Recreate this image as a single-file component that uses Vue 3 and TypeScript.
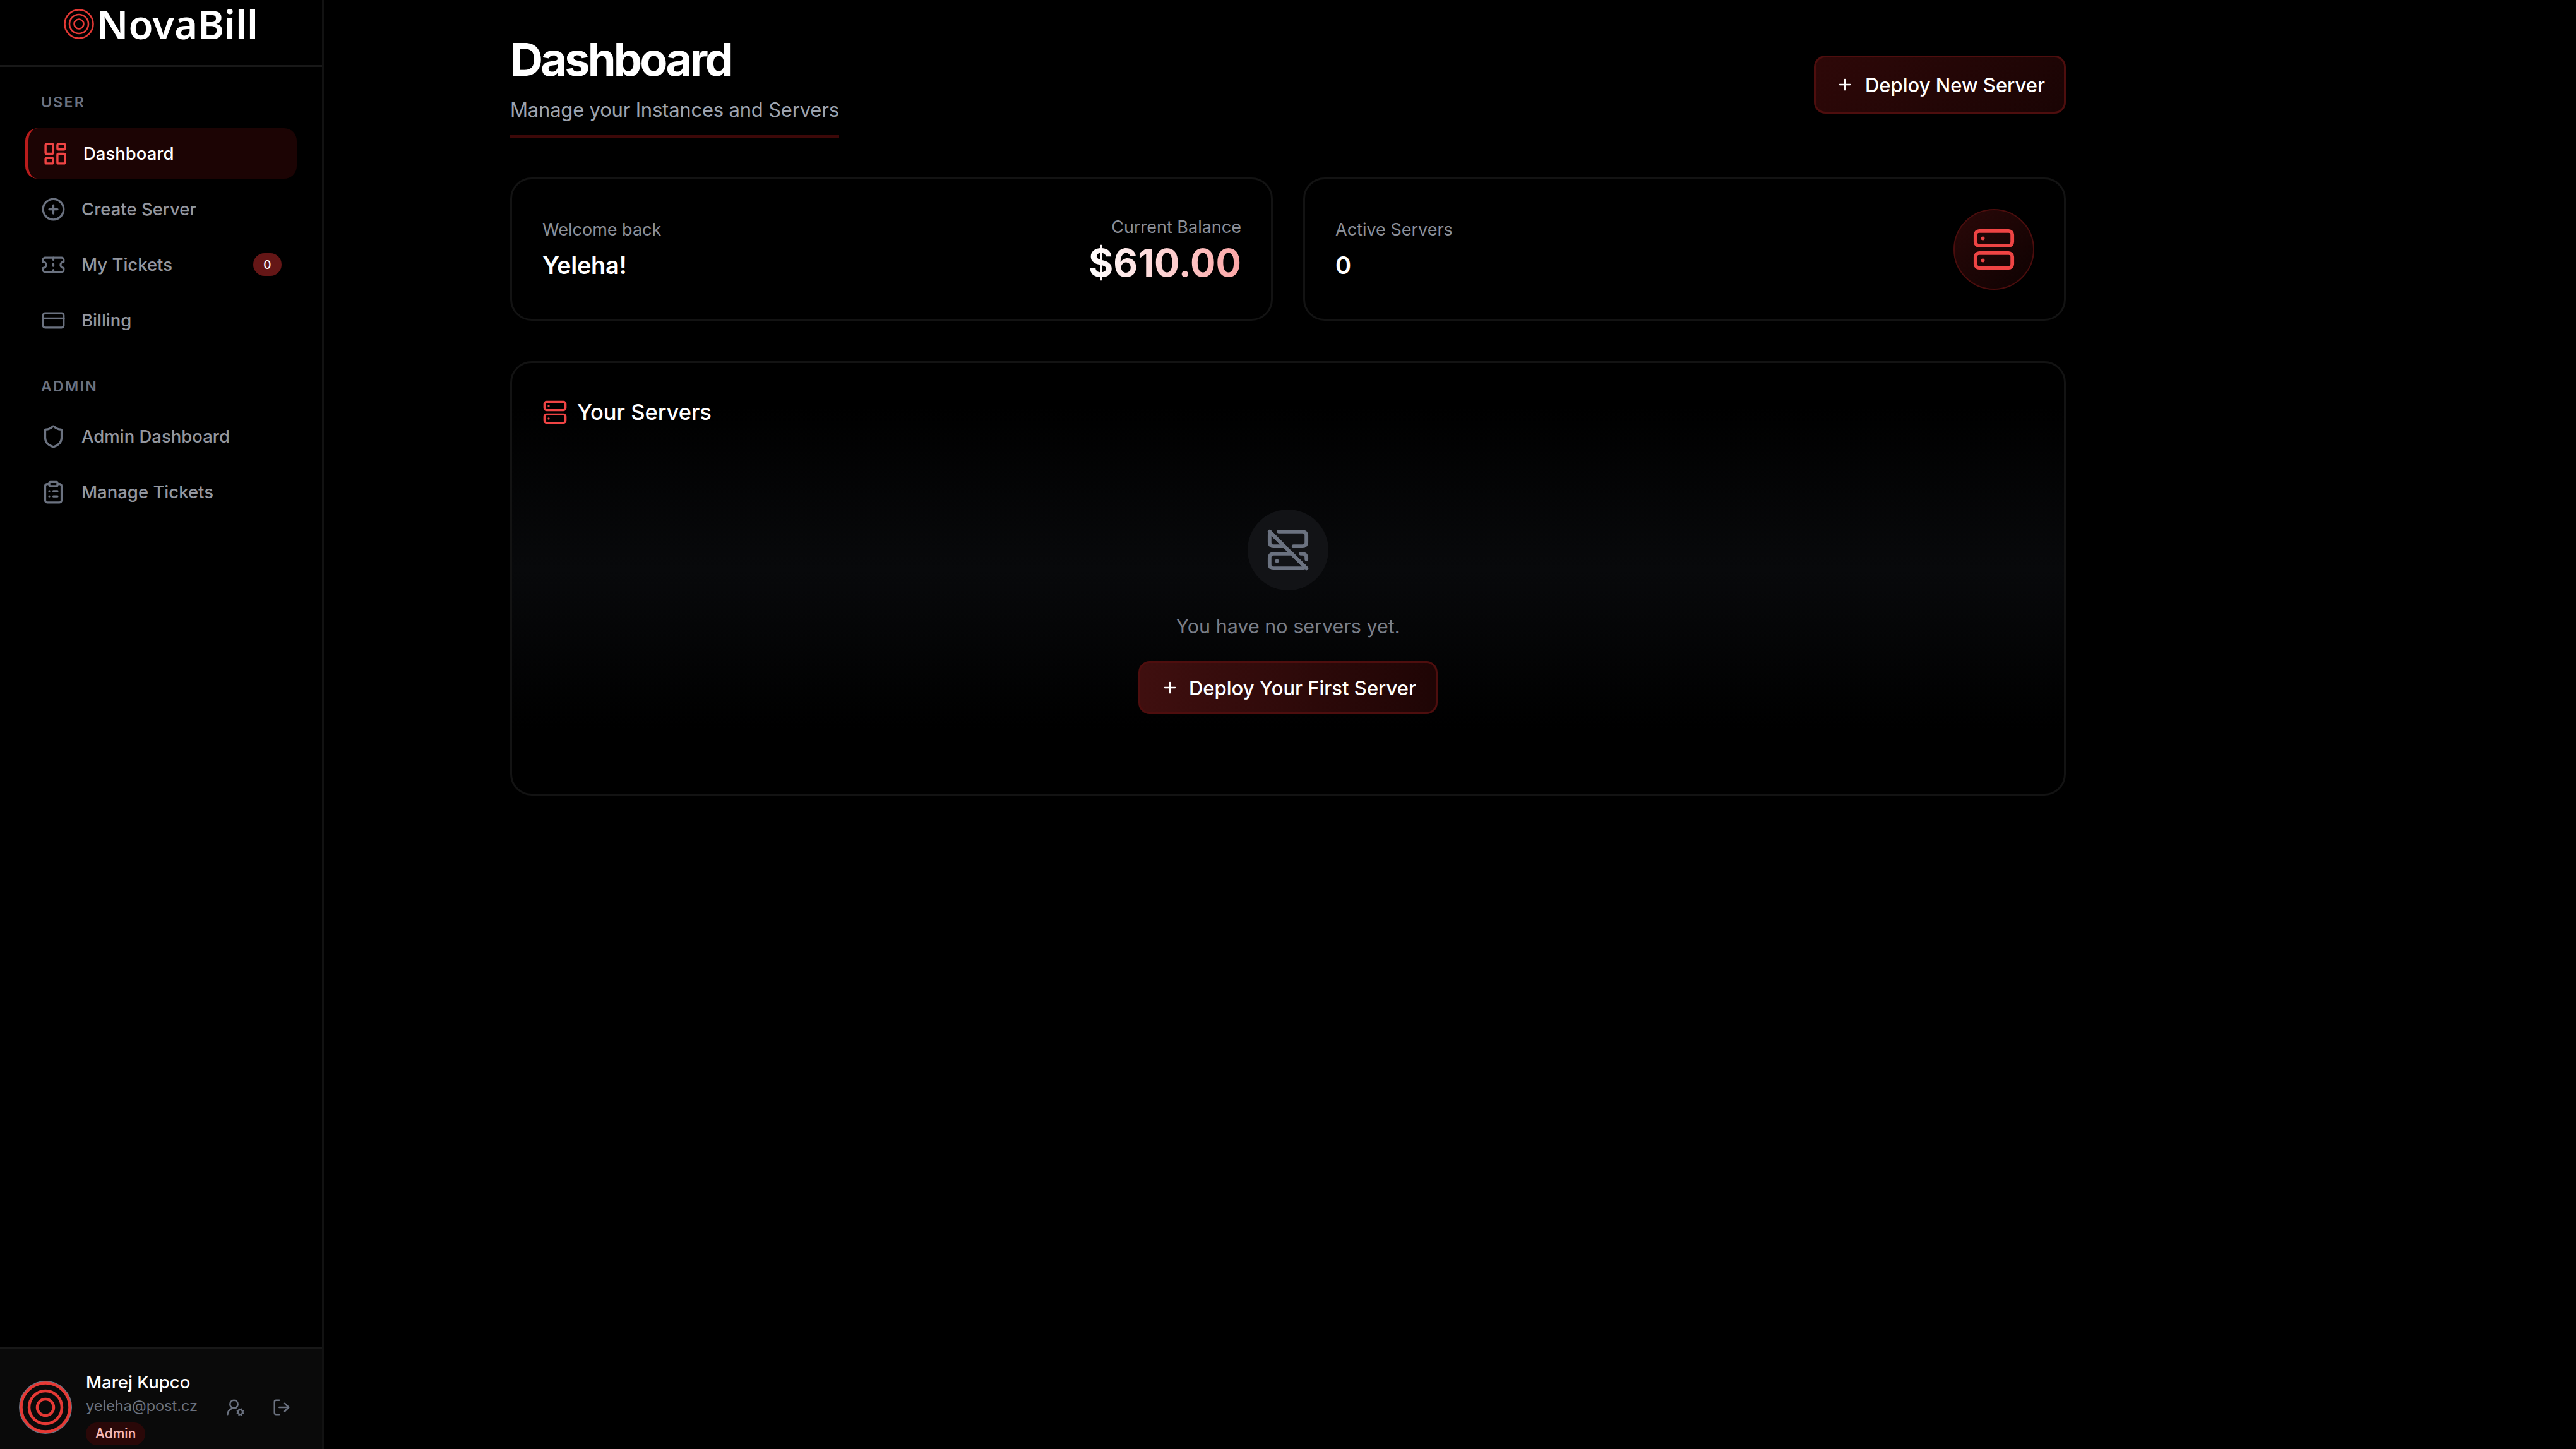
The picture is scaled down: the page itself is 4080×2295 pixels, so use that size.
<script setup lang="ts">
const icons: Record<string, string> = {
  dashboard: '<rect x="3" y="3" width="7" height="9" rx="1"/><rect x="14" y="3" width="7" height="5" rx="1"/><rect x="14" y="12" width="7" height="9" rx="1"/><rect x="3" y="16" width="7" height="5" rx="1"/>',
  create: '<circle cx="12" cy="12" r="10"/><path d="M8 12h8M12 8v8"/>',
  ticket: '<path d="M2 9a3 3 0 0 1 0 6v2a2 2 0 0 0 2 2h16a2 2 0 0 0 2-2v-2a3 3 0 0 1 0-6V7a2 2 0 0 0-2-2H4a2 2 0 0 0-2 2Z"/><path d="M12 5v2M12 17v2M12 11v2"/>',
  card: '<rect x="2" y="5" width="20" height="14" rx="2"/><path d="M2 10h20"/>',
  shield: '<path d="M20 13c0 5-3.5 7.5-7.66 8.95a1 1 0 0 1-.67-.01C7.5 20.5 4 18 4 13V6a1 1 0 0 1 1-1c2 0 4.5-1.2 6.24-2.72a1.17 1.17 0 0 1 1.52 0C14.51 3.81 17 5 19 5a1 1 0 0 1 1 1z"/>',
  clipboard: '<rect x="8" y="2" width="8" height="4" rx="1"/><path d="M16 4h2a2 2 0 0 1 2 2v14a2 2 0 0 1-2 2H6a2 2 0 0 1-2-2V6a2 2 0 0 1 2-2h2"/><path d="M12 11h4M12 16h4M8 11h.01M8 16h.01"/>',
  server: '<rect x="2" y="2" width="20" height="8" rx="2"/><rect x="2" y="14" width="20" height="8" rx="2"/><path d="M6 6h.01M6 18h.01"/>',
  serverOff: '<path d="M7 2h13a2 2 0 0 1 2 2v4a2 2 0 0 1-2 2h-5"/><path d="M10 10 2.5 2.5C2 2 2 2.5 2 5v3a2 2 0 0 0 2 2h6z"/><path d="M22 17v-1a2 2 0 0 0-2-2h-1"/><path d="M4 14a2 2 0 0 0-2 2v4a2 2 0 0 0 2 2h16.5l1-.5.5.5-8-8H4z"/><path d="M6 18h.01M2 2l20 20"/>',
  userCog: '<path d="m14.305 19.53.923-.382M15.228 16.852l-.923-.383M16.852 15.228l-.383-.923M16.852 20.772l-.383.924M19.148 15.228l.383-.923M19.53 21.696l-.382-.924M20.772 16.852l.924-.383M20.772 19.148l.924.383M2 21a8 8 0 0 1 10.434-7.62"/><circle cx="10" cy="8" r="5"/><circle cx="18" cy="18" r="3"/>',
  logout: '<path d="M9 21H5a2 2 0 0 1-2-2V5a2 2 0 0 1 2-2h4"/><path d="m16 17 5-5-5-5M21 12H9"/>',
  plus: '<path d="M5 12h14M12 5v14"/>'
}

const userNav = [
  { label: 'Dashboard', icon: 'dashboard', active: true },
  { label: 'Create Server', icon: 'create' },
  { label: 'My Tickets', icon: 'ticket', badge: 0 },
  { label: 'Billing', icon: 'card' }
]

const adminNav = [
  { label: 'Admin Dashboard', icon: 'shield' },
  { label: 'Manage Tickets', icon: 'clipboard' }
]
</script>

<template>
  <div class="app">
    <aside class="sidebar">
      <div class="brand">
        <svg class="brand-mark" viewBox="0 0 48 48">
          <circle cx="24" cy="24" r="22.5" />
          <circle cx="24" cy="24" r="15" />
          <circle cx="24" cy="24" r="7.5" />
        </svg>
        <span>NovaBill</span>
      </div>

      <nav class="nav">
        <p class="nav-title">USER</p>
        <a v-for="item in userNav" :key="item.label" class="nav-item" :class="{ active: item.active }">
          <svg class="icon" viewBox="0 0 24 24" v-html="icons[item.icon]"></svg>
          <span>{{ item.label }}</span>
          <em v-if="item.badge !== undefined" class="badge">{{ item.badge }}</em>
        </a>

        <p class="nav-title admin">ADMIN</p>
        <a v-for="item in adminNav" :key="item.label" class="nav-item">
          <svg class="icon" viewBox="0 0 24 24" v-html="icons[item.icon]"></svg>
          <span>{{ item.label }}</span>
        </a>
      </nav>

      <div class="account">
        <svg class="avatar" viewBox="0 0 84 84">
          <circle class="avatar-edge" cx="42" cy="42" r="41" />
          <circle cx="42" cy="42" r="38.5" />
          <circle cx="42" cy="42" r="26" />
          <circle cx="42" cy="42" r="13" />
        </svg>
        <div class="account-info">
          <strong>Marej Kupco</strong>
          <span>yeleha@post.cz</span>
          <em>Admin</em>
        </div>
        <svg class="icon small cog" viewBox="0 0 24 24" v-html="icons.userCog"></svg>
        <svg class="icon small" viewBox="0 0 24 24" v-html="icons.logout"></svg>
      </div>
    </aside>

    <main class="main">
      <header class="page-head">
        <div class="page-title">
          <h1>Dashboard</h1>
          <p>Manage your Instances and Servers</p>
        </div>
        <button class="btn">
          <svg class="icon plus" viewBox="0 0 24 24" v-html="icons.plus"></svg>
          Deploy New Server
        </button>
      </header>

      <section class="stats">
        <div class="card">
          <div>
            <p class="label">Welcome back</p>
            <p class="value">Yeleha!</p>
          </div>
          <div class="balance">
            <p class="label">Current Balance</p>
            <p class="amount">$610.00</p>
          </div>
        </div>
        <div class="card">
          <div>
            <p class="label">Active Servers</p>
            <p class="value">0</p>
          </div>
          <div class="stat-icon">
            <svg class="icon" viewBox="0 0 24 24" v-html="icons.server"></svg>
          </div>
        </div>
      </section>

      <section class="panel">
        <h2>
          <svg class="icon" viewBox="0 0 24 24" v-html="icons.server"></svg>
          Your Servers
        </h2>
        <div class="empty">
          <div class="empty-icon">
            <svg class="icon" viewBox="0 0 24 24" v-html="icons.serverOff"></svg>
          </div>
          <p>You have no servers yet.</p>
          <button class="btn first">
            <svg class="icon plus" viewBox="0 0 24 24" v-html="icons.plus"></svg>
            Deploy Your First Server
          </button>
        </div>
      </section>
    </main>
  </div>
</template>

<style>
html,
body {
  margin: 0;
  background: #000;
}
</style>

<style scoped>
.app {
  display: flex;
  width: 4080px;
  height: 2295px;
  overflow: hidden;
  background: #000;
  color: #fff;
  font-family: Inter, 'Liberation Sans', sans-serif;
}

.icon {
  display: block;
  fill: none;
  stroke: currentColor;
  stroke-width: 2;
  stroke-linecap: round;
  stroke-linejoin: round;
  flex: none;
}

/* sidebar */
.sidebar {
  display: flex;
  flex-direction: column;
  flex: none;
  width: 513px;
  box-sizing: border-box;
  border-right: 3px solid #121212;
}

.brand {
  display: flex;
  align-items: flex-start;
  justify-content: center;
  gap: 4px;
  height: 106px;
  box-sizing: border-box;
  border-bottom: 3px solid #181818;
  font-family: 'Noto Sans', sans-serif;
  font-size: 63.5px;
  font-weight: 600;
  line-height: 76px;
}

.brand-mark {
  width: 48px;
  height: 48px;
  margin-top: 14px;
  fill: none;
  stroke: #e53935;
  stroke-width: 2.6;
}

.nav {
  display: flex;
  flex-direction: column;
  padding: 44px 40px 0;
}

.nav-title {
  margin: 0 0 29px 25px;
  font-size: 23px;
  line-height: 24px;
  font-weight: 600;
  letter-spacing: 2.3px;
  color: #6b7280;
}

.nav-title.admin {
  margin-top: 45px;
  margin-bottom: 27px;
}

.nav-item {
  display: flex;
  align-items: center;
  gap: 25px;
  height: 80px;
  margin-bottom: 8px;
  padding: 0 24px 0 25px;
  box-sizing: border-box;
  border-radius: 20px;
  font-size: 27.5px;
  font-weight: 500;
  color: #94979f;
}

.nav-item .icon {
  width: 39px;
  height: 39px;
  color: #6b7280;
}

.nav-item.active {
  padding-left: 22px;
  gap: 24px;
  border-left: 5px solid #b91c1c;
  background: #1c0404;
  color: #fff;
}

.nav-item.active .icon {
  width: 41px;
  height: 41px;
  color: #ef4444;
}

.badge {
  margin-left: auto;
  display: flex;
  align-items: center;
  justify-content: center;
  width: 45px;
  height: 36px;
  border-radius: 18px;
  background: #641616;
  color: #fff;
  font-size: 19px;
  font-style: normal;
}

.account {
  display: flex;
  align-items: center;
  margin-top: auto;
  height: 162px;
  box-sizing: border-box;
  padding: 27px 0 0 30px;
  border-top: 3px solid #181818;
  background: #0a0a0a;
  color: #6b7280;
}

.avatar {
  flex: none;
  width: 84px;
  height: 84px;
  fill: none;
  stroke: #e53935;
  stroke-width: 4.5;
}

.avatar-edge {
  stroke: #6b7280;
  stroke-width: 2;
}

.account-info {
  display: flex;
  flex-direction: column;
  align-items: flex-start;
  width: 222px;
  margin-left: 22px;
  flex: none;
}

.account-info strong {
  font-size: 27.5px;
  line-height: 38px;
  font-weight: 500;
  color: #fff;
}

.account-info span {
  font-size: 23.5px;
  line-height: 38px;
}

.account-info em {
  margin-top: 7px;
  padding: 0 15px;
  border-radius: 19px;
  background: #2a0808;
  color: #f5b8b8;
  font-size: 21px;
  line-height: 36px;
  font-style: normal;
  font-weight: 500;
}

.icon.small {
  width: 30px;
  height: 30px;
}

.icon.cog {
  margin-right: 43px;
}

/* main column */
.main {
  flex: 1;
  min-width: 0;
  padding: 0 808px 0 295px;
}

.page-head {
  display: flex;
  align-items: flex-start;
  justify-content: space-between;
  height: 215px;
}

.page-title {
  height: 164px;
  padding-top: 50px;
  border-bottom: 4px solid #3d0808;
}

.page-title h1 {
  margin: 0;
  font-size: 72px;
  line-height: 88px;
  font-weight: 700;
  letter-spacing: -3.8px;
}

.page-title p {
  margin: 0;
  padding-top: 16px;
  font-size: 31px;
  line-height: 40px;
  letter-spacing: -0.2px;
  color: #9ca3af;
}

.btn {
  display: inline-flex;
  align-items: center;
  gap: 18px;
  margin-top: 88px;
  height: 92px;
  padding: 0 30px 0 32px;
  border: 3px solid #4e0e0e;
  border-radius: 18px;
  background: linear-gradient(135deg, #2e0808, #1a0404);
  color: #fff;
  font-family: inherit;
  font-size: 31px;
  font-weight: 500;
}

.icon.plus {
  width: 28px;
  height: 28px;
}

.stats {
  display: grid;
  grid-template-columns: 1fr 1fr;
  gap: 48px;
  margin-top: 66px;
}

.card {
  display: flex;
  align-items: center;
  justify-content: space-between;
  height: 227px;
  padding: 0 47px 0 48px;
  box-sizing: border-box;
  border: 3px solid #131313;
  border-radius: 34px;
}

.label {
  margin: 0;
  font-size: 27px;
  line-height: 36px;
  color: #8b8f98;
}

.value {
  margin: 14px 0 0;
  font-size: 38px;
  line-height: 48px;
  font-weight: 600;
  letter-spacing: -0.3px;
}

.balance {
  text-align: right;
}

.amount {
  margin: 6px 0 0;
  font-size: 60px;
  line-height: 64px;
  font-weight: 700;
  background: linear-gradient(90deg, #fff, #fca5a5);
  -webkit-background-clip: text;
  background-clip: text;
  color: transparent;
}

.stat-icon {
  display: flex;
  align-items: center;
  justify-content: center;
  width: 128px;
  height: 128px;
  box-sizing: border-box;
  border: 2px solid #4a0d0d;
  border-radius: 50%;
  background: linear-gradient(135deg, #2a0808, #0e0202);
  color: #ef4444;
}

.stat-icon .icon {
  width: 70px;
  height: 70px;
}

.panel {
  height: 688px;
  margin-top: 64px;
  padding: 53px 48px 0;
  box-sizing: border-box;
  border: 3px solid #131313;
  border-radius: 34px;
  background: linear-gradient(180deg, #000 10%, #08090b 48%, #000 85%);
}

.panel h2 {
  display: flex;
  align-items: center;
  gap: 15px;
  margin: 0;
  font-size: 34.5px;
  line-height: 50px;
  font-weight: 500;
}

.panel h2 .icon {
  width: 40px;
  height: 40px;
  color: #ef4444;
}

.empty {
  display: flex;
  flex-direction: column;
  align-items: center;
  margin-top: 129px;
}

.empty-icon {
  display: flex;
  align-items: center;
  justify-content: center;
  width: 128px;
  height: 128px;
  border-radius: 50%;
  background: #121316;
  color: #6b7280;
}

.empty-icon .icon {
  width: 70px;
  height: 70px;
}

.empty p {
  margin: 35px 0 0;
  font-size: 30.5px;
  line-height: 44px;
  color: #7a7f89;
}

.btn.first {
  margin-top: 33px;
  height: 84px;
  padding: 0 31px 0 33px;
  background: linear-gradient(90deg, #3f0f0f, #1f0505);
  gap: 16px;
}
</style>
